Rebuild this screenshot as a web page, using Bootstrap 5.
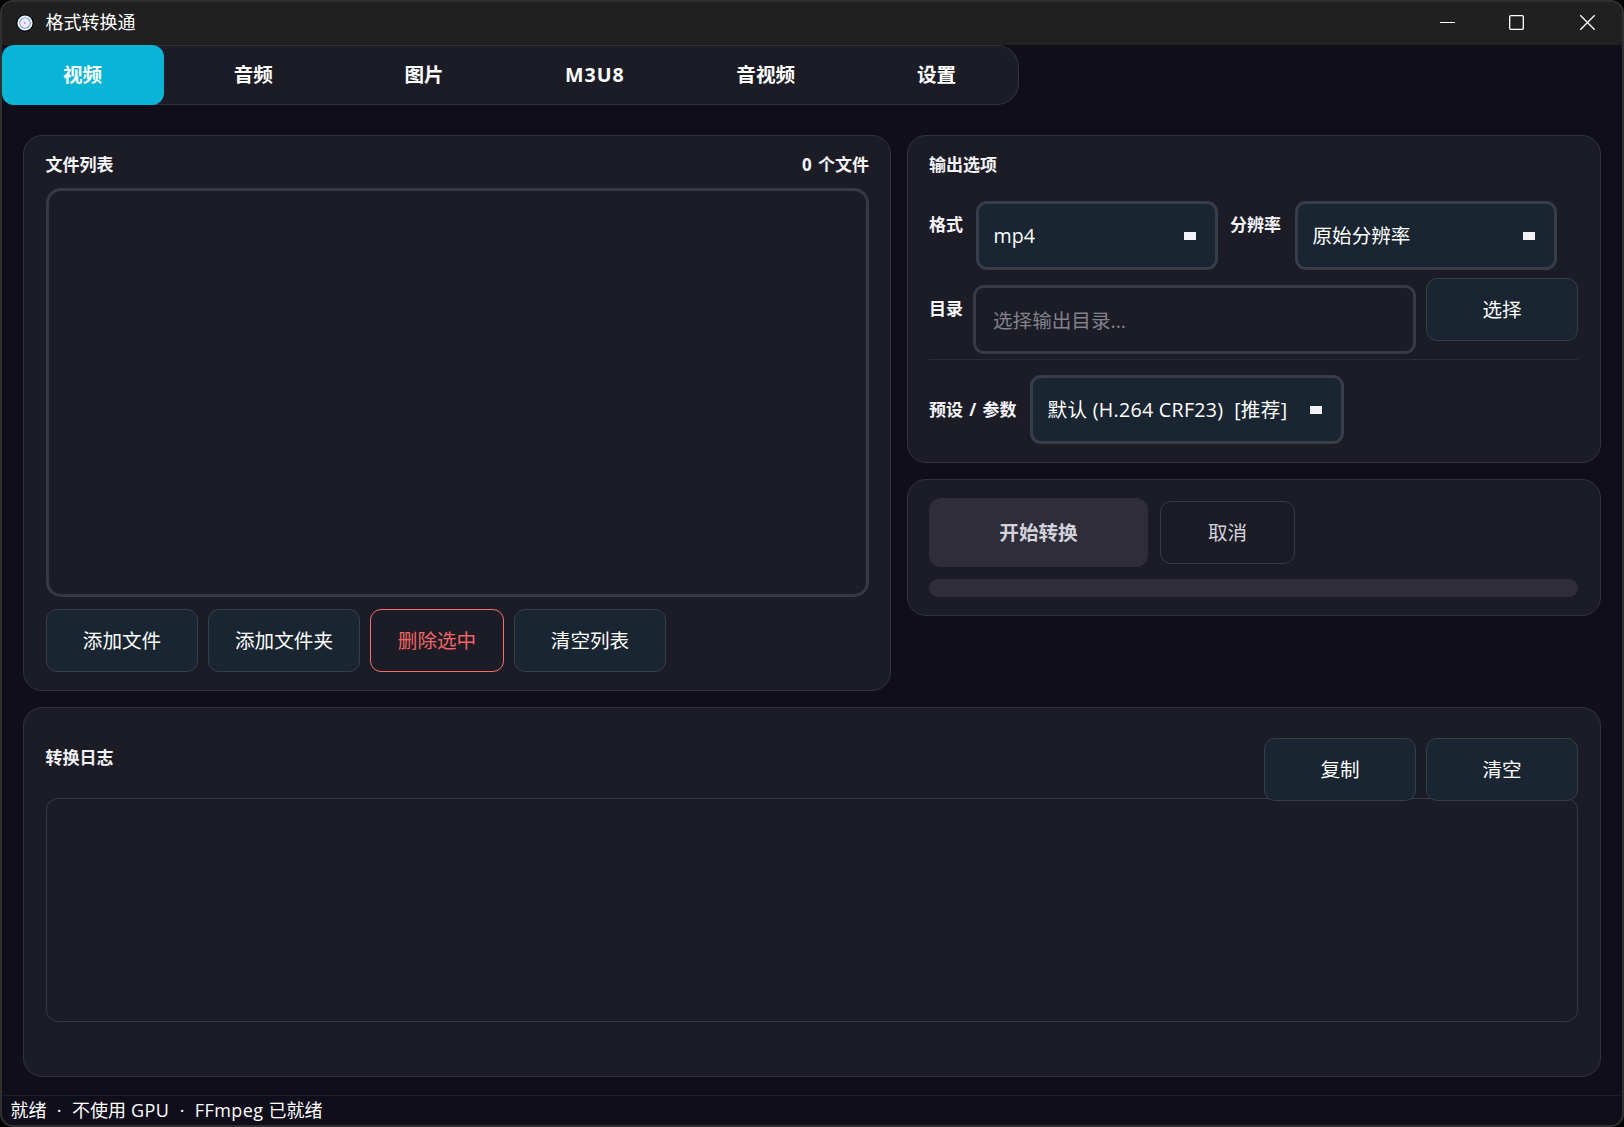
<!DOCTYPE html>
<html lang="zh-CN" data-bs-theme="dark">
<head>
<meta charset="utf-8">
<title>格式转换通</title>
<meta name="viewport" content="width=device-width, initial-scale=1">
<link href="https://cdn.jsdelivr.net/npm/bootstrap@5.3.0/dist/css/bootstrap.min.css" rel="stylesheet">
<style>
:root{--line:#32323d;--line2:#393944;--panel:#1c1c26;--field:#192531}
body{background:#000;color:#fff;font-family:"Open Sans","Noto Sans CJK SC",sans-serif;font-size:19.6px;line-height:28px;height:1127px;overflow:hidden}
.app-window{height:1127px;border:2px solid #303030;border-radius:13px;background:#0f0e1a;overflow:hidden}
.titlebar{height:43px;background:#202020;font-size:18px;padding:0 26px 2px 14px}
.app-name{margin-left:11.5px;margin-top:-1px}
.gap-ctl{gap:54px}
.ctl-min{margin-right:-2px}
.tabstrip{height:60px;width:1017px;background:var(--panel);border:1px solid var(--line);border-left:0;border-radius:12px 22px 22px 12px;gap:8.8px;flex-wrap:nowrap}
.tabstrip .nav-link{width:162px;height:60px;margin-top:-1px;padding:0 1px 0 0;line-height:59px;text-align:center;font-weight:700;color:#fff;border-radius:12px}
.tabstrip .nav-link.active{background:#08b5d6;color:#fff}
.tab-wide{letter-spacing:1px}
.workspace{padding:30px 21px 0;gap:16px}
.panel{background:var(--panel);border:1px solid var(--line);border-radius:19px;padding:17px 22px 0}
.panel-files{width:868px;height:556px;padding-right:21px}
.side{width:694px;gap:16px}
.side .panel{padding-left:21px;padding-right:22px}
.panel-output{height:328px}
.side .panel-run{height:137px;padding-top:18px}
.panel-log{height:370px;padding-top:30px}
.label-text{font-size:17px;font-weight:700;line-height:24px;white-space:nowrap;color:#f4f4f8;word-spacing:1.8px}
.panel-files .label-text,.panel-log .label-text{margin-left:-.5px}
.filebox{height:409px;margin-top:11px;border:3px solid var(--line2);border-radius:15px}
.file-actions{margin-top:12px}
.btn-app{width:152px;height:63px;padding:0;line-height:60px;font-size:19.6px;color:#fff;background:var(--field);border:1px solid #363e4a;border-radius:11px;flex:none}
.btn-app:hover{color:#fff;background:#223140;border-color:#46505d}
.btn-del{width:134px;background:transparent;color:#f26565;border:1.5px solid #f96c6c}
.gap-btn{gap:10px}
.picker{height:69px;border:3px solid #383e49;border-radius:11px;background:var(--field);padding:0 19px 0 14.5px;flex:none;white-space:pre}
.picker::after{content:"";width:12px;height:8px;background:#f2f2f7;margin-top:1px;flex:none}
.latin-wide{letter-spacing:.3px}
.row-fmt{margin-top:24px}
.row-fmt .label-text{line-height:48px}
.row-dir{margin-top:8px;height:76px}
.row-dir .label-text{line-height:62px}
.dir-input,.dir-input:focus{width:443px;height:69px;margin:7px 0 0 10px;padding:2px 17px 0;background:transparent;border:3px solid var(--line2);border-radius:11px;font-size:19.6px;color:#fff;box-shadow:none}
.dir-input::placeholder{color:#82828c}
.rule{height:1px;background:#2c2c37;margin:5px 0 15px}
.btn-start,.btn-start:disabled{width:219px;height:69px;background:#2e2d38;border:0;border-radius:12px;font-size:19.6px;font-weight:700;color:#d2d2dc;opacity:1}
.btn-cancel,.btn-cancel:disabled{width:135px;background:transparent;border:1px solid #3a3a46;color:#d2d2dc;opacity:1}
.run-bar{height:18px;border-radius:9px;background:#2e2d38;margin-top:12px}
.logbox{height:223.5px;margin-top:-3px;border:1px solid var(--line2);border-radius:12px}
.statusline{margin-top:18px;height:30px;border-top:1px solid #1f1e2a;padding:0 8.5px;font-size:18px;line-height:28px;white-space:pre;word-spacing:.5px}
.statusline span{letter-spacing:.4px}
</style>
<script src="https://cdn.jsdelivr.net/npm/bootstrap@5.3.0/dist/js/bootstrap.bundle.min.js"></script>
</head>
<body>
<div class="app-window d-flex flex-column">
  <header class="titlebar d-flex align-items-center flex-shrink-0">
    <svg width="18" height="18" viewBox="0 0 18 18" class="flex-shrink-0"><circle cx="9" cy="9" r="8.8" fill="#05060c"/><circle cx="9" cy="9" r="7.6" fill="#f5f7fd"/><circle cx="9" cy="9" r="5.3" fill="#f1effc" stroke="#6fa5f5" stroke-width="1.1"/><path d="M7.8 7.4v3.2l2.6-1.6z" fill="#d78ae8"/></svg>
    <span class="app-name">格式转换通</span>
    <div class="ms-auto d-flex align-items-center gap-ctl">
      <svg class="ctl-min" width="17" height="17" viewBox="0 0 17 17"><path d="M1 8.5h15" stroke="#fff"/></svg>
      <svg width="17" height="17" viewBox="0 0 17 17"><rect x="1.7" y="1.7" width="13.6" height="13.6" rx="1" fill="none" stroke="#fff" stroke-width="1.3"/></svg>
      <svg width="17" height="17" viewBox="0 0 17 17"><path d="M1.3 1.3l14.4 14.4M15.7 1.3L1.3 15.7" stroke="#fff" stroke-width="1.3"/></svg>
    </div>
  </header>

  <nav class="tabstrip nav flex-shrink-0">
    <a class="nav-link active">视频</a><a class="nav-link">音频</a><a class="nav-link">图片</a><a class="nav-link tab-wide">M3U8</a><a class="nav-link">音视频</a><a class="nav-link">设置</a>
  </nav>

  <main class="workspace d-flex flex-column">
    <div class="d-flex gap-3">
      <section class="panel panel-files">
        <div class="d-flex justify-content-between label-text"><span>文件列表</span><span>0 个文件</span></div>
        <div class="filebox"></div>
        <div class="file-actions d-flex gap-btn">
          <button class="btn btn-app">添加文件</button>
          <button class="btn btn-app">添加文件夹</button>
          <button class="btn btn-app btn-del">删除选中</button>
          <button class="btn btn-app">清空列表</button>
        </div>
      </section>

      <div class="side d-flex flex-column">
        <section class="panel panel-output">
          <div class="label-text">输出选项</div>
          <div class="row-fmt d-flex align-items-start">
            <span class="label-text" style="width:47px">格式</span>
            <div class="picker d-flex align-items-center justify-content-between" style="width:242px">mp4</div>
            <span class="label-text" style="width:65px;margin-left:12px">分辨率</span>
            <div class="picker d-flex align-items-center justify-content-between" style="width:262px">原始分辨率</div>
          </div>
          <div class="row-dir d-flex align-items-start">
            <span class="label-text">目录</span>
            <input class="form-control dir-input" placeholder="选择输出目录...">
            <button class="btn btn-app ms-auto">选择</button>
          </div>
          <div class="rule"></div>
          <div class="d-flex align-items-center">
            <span class="label-text" style="width:101px">预设 / 参数</span>
            <div class="picker d-flex align-items-center justify-content-between" style="width:314px"><span class="latin-wide">默认 (H.264 CRF23)  [推荐]</span></div>
          </div>
        </section>
        <section class="panel panel-run">
          <div class="d-flex align-items-center" style="gap:12px">
            <button class="btn btn-start" disabled>开始转换</button>
            <button class="btn btn-app btn-cancel" disabled>取消</button>
          </div>
          <div class="run-bar"></div>
        </section>
      </div>
    </div>

    <section class="panel panel-log">
      <div class="d-flex align-items-start justify-content-between">
        <span class="label-text" style="line-height:40px">转换日志</span>
        <div class="d-flex gap-btn">
          <button class="btn btn-app">复制</button>
          <button class="btn btn-app">清空</button>
        </div>
      </div>
      <div class="logbox"></div>
    </section>
  </main>

  <footer class="statusline">就绪  ·  不使用 <span>GPU</span>  ·  <span>FFmpeg</span> 已就绪</footer>
</div>
</body>
</html>
